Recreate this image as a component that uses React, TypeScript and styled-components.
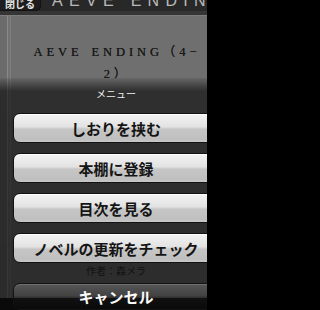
import styled, { createGlobalStyle } from "styled-components";

const GlobalStyle = createGlobalStyle`
  html, body {
    margin: 0;
    padding: 0;
    background: #000;
    overflow: hidden;
  }
  * {
    box-sizing: border-box;
  }
`;

// the device screen is wider than the visible crop
const Viewport = styled.div`
  width: 207px;
  height: 310px;
  overflow: hidden;
`;

const Screen = styled.div`
  position: relative;
  width: 232px;
  height: 310px;
  overflow: hidden;
  display: flex;
  flex-direction: column;
  background: #2b2b2b;
  font-family: "Noto Sans CJK JP", "Liberation Sans", sans-serif;
`;

const NavBar = styled.div`
  height: 11px;
  flex-shrink: 0;
  display: flex;
  align-items: flex-end;
  gap: 11px;
  overflow: hidden;
  background: #282828;
`;

const CloseButton = styled.div`
  width: 41px;
  height: 16px;
  flex-shrink: 0;
  display: flex;
  align-items: flex-end;
  justify-content: center;
  padding-bottom: 1px;
  background: #1d1d1d;
  border: 1px solid #111;
  border-top: none;
  border-left: none;
  border-radius: 0 0 5px 0;
  color: #e4e4e4;
  font-size: 10px;
  line-height: 10px;
  font-weight: 700;
`;

const NavTitle = styled.div`
  height: 15px;
  line-height: 16px;
  font-family: "Liberation Sans", sans-serif;
  font-size: 16px;
  letter-spacing: 6.3px;
  color: #b9b9b9;
  white-space: nowrap;
  margin-bottom: 3px;
`;

const NavEdge = styled.div`
  height: 5px;
  flex-shrink: 0;
  background: #353535;
  border-bottom: 1px solid #7c7c7c;
`;

const Page = styled.div`
  flex: 1;
  display: flex;
  flex-direction: column;
  align-items: center;
  padding: 25px 0 21px;
  background: linear-gradient(
    to right,
    #6b6b6b 0,
    #6b6b6b 7px,
    #8a8a8a 7px,
    #8a8a8a 8px,
    #727272 8px,
    #727272 10px,
    #7e7e7e 10px,
    #7e7e7e 11px,
    #6f6f6f 11px
  );
`;

const BookTitle = styled.h1`
  margin: 0;
  width: 180px;
  margin-left: 2px;
  text-align: center;
  font-family: "Liberation Serif", "Noto Sans CJK JP", serif;
  font-size: 12.5px;
  font-weight: 400;
  line-height: 22px;
  letter-spacing: 3.9px;
  word-spacing: 2px;
  color: #1a1a1a;
  text-shadow: 0 0 0.4px #1a1a1a;
  white-space: nowrap;
`;

const Author = styled.div`
  margin-top: auto;
  font-size: 10px;
  line-height: 12px;
  color: #2e2e2e;
`;

const BottomBar = styled.div`
  height: 12px;
  flex-shrink: 0;
  background: #181818;
`;

const Sheet = styled.div`
  position: absolute;
  top: 78px;
  left: 0;
  right: 0;
  bottom: 0;
  display: flex;
  flex-direction: column;
  padding: 9px 13px 0;
  border-top: 1px solid rgba(255, 255, 255, 0.28);
  background: linear-gradient(
    rgba(0, 0, 0, 0.12) 0,
    rgba(0, 0, 0, 0.58) 12px,
    rgba(0, 0, 0, 0.6) 100%
  );
`;

const SheetLabel = styled.div`
  height: 12px;
  line-height: 12px;
  text-align: center;
  font-size: 10px;
  color: #ededed;
`;

const ButtonList = styled.div`
  display: flex;
  flex-direction: column;
  gap: 10px;
  margin-top: 13px;
`;

const SheetButton = styled.button<{ $cancel?: boolean }>`
  height: 30px;
  width: 100%;
  padding: 0;
  display: flex;
  align-items: center;
  justify-content: center;
  border: 1px solid #121212;
  border-radius: 7px;
  font-family: "Noto Sans CJK JP", sans-serif;
  font-size: 15px;
  font-weight: 700;
  line-height: 1;
  color: ${(p) => (p.$cancel ? "#fafafa" : "#151515")};
  background: ${(p) =>
    p.$cancel
      ? "linear-gradient(rgba(255,255,255,0.2) 0%, rgba(255,255,255,0.1) 48%, rgba(255,255,255,0.03) 52%, rgba(255,255,255,0) 100%)"
      : "linear-gradient(#f3f3f3 0%, #e2e2e2 46%, #c6c6c6 54%, #bfbfbf 90%, #c9c9c9 100%)"};
  box-shadow: ${(p) =>
    p.$cancel
      ? "inset 0 1px 0 rgba(255,255,255,0.15)"
      : "inset 0 1px 0 rgba(255,255,255,0.9)"};
`;

const CancelButton = styled(SheetButton)`
  margin-top: 20px;
`;

const menuItems = [
  "しおりを挟む",
  "本棚に登録",
  "目次を見る",
  "ノベルの更新をチェック",
];

export default function App() {
  return (
    <>
      <GlobalStyle />
      <Viewport>
        <Screen>
          <NavBar>
            <CloseButton>閉じる</CloseButton>
            <NavTitle>AEVE ENDING</NavTitle>
          </NavBar>
          <NavEdge />
          <Page>
            <BookTitle>
              AEVE ENDING（4−
              <br />
              2）
            </BookTitle>
            <Author>作者：森メラ</Author>
          </Page>
          <BottomBar />
          <Sheet>
            <SheetLabel>メニュー</SheetLabel>
            <ButtonList>
              {menuItems.map((label) => (
                <SheetButton key={label}>{label}</SheetButton>
              ))}
            </ButtonList>
            <CancelButton $cancel>キャンセル</CancelButton>
          </Sheet>
        </Screen>
      </Viewport>
    </>
  );
}
